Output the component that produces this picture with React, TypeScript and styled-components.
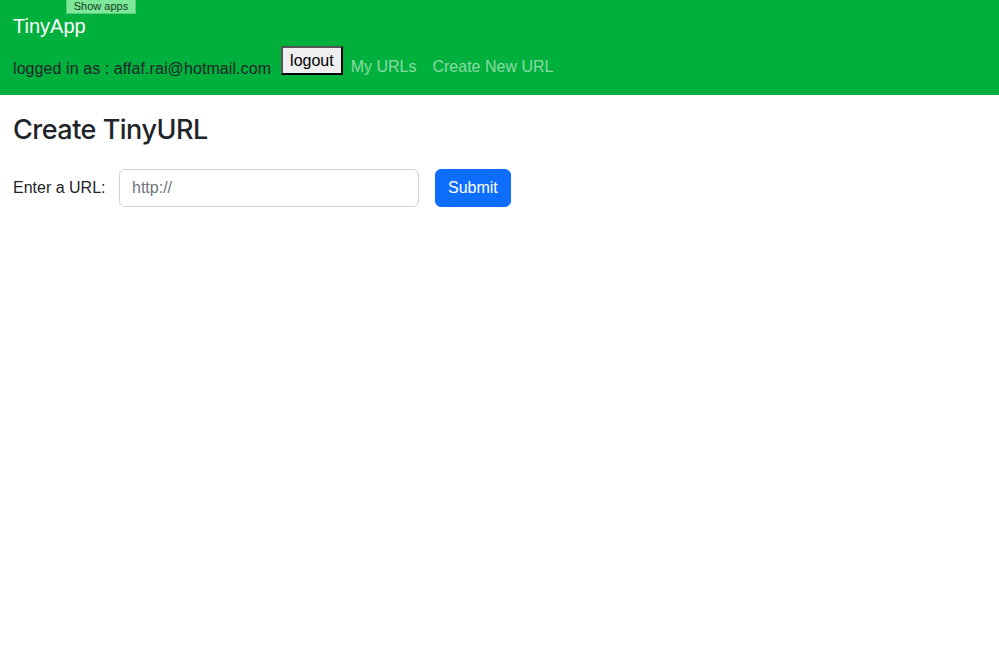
import styled, { createGlobalStyle } from 'styled-components';

const GlobalStyle = createGlobalStyle`
  body {
    margin: 0;
    font-family: "Liberation Sans", Arial, sans-serif;
    font-size: 16px;
    line-height: 1.5;
    color: #212529;
    background: #fff;
  }
  * {
    box-sizing: border-box;
  }
`;

const NavBar = styled.nav`
  position: relative;
  background: #00b03c;
  padding: 8px 13px 8px;
`;

const AppsBadge = styled.div`
  position: absolute;
  top: -6px;
  left: 66px;
  width: 70px;
  height: 20px;
  padding-top: 5px;
  background: #7ee89a;
  border: 1px solid #5ccc7c;
  font-size: 11px;
  line-height: 12px;
  text-align: center;
  color: #123d1e;
`;

const Brand = styled.a`
  display: block;
  padding: 3px 0 5px;
  font-size: 20px;
  line-height: 30px;
  color: #fff;
  text-decoration: none;
`;

const NavRow = styled.div`
  display: flex;
  align-items: flex-start;
`;

const LoggedIn = styled.span`
  margin-top: 11px;
  margin-right: 10px;
  color: #212529;
  letter-spacing: 0.08px;
`;

const LogoutButton = styled.button`
  height: 29px;
  padding: 0 7px;
  font-family: "Liberation Sans", Arial, sans-serif;
  font-size: 16px;
  color: #000;
  background: #efefef;
  border: 2px outset #555;
`;

const NavLink = styled.a`
  padding: 9px 8px 8px;
  color: rgba(255, 255, 255, 0.55);
  text-decoration: none;
`;

const Main = styled.main`
  padding: 18px 13px;
`;

const Heading = styled.h3`
  margin: 0 0 22px;
  font-family: Inter, "Liberation Sans", sans-serif;
  font-size: 27px;
  font-weight: 500;
  line-height: 34px;
  letter-spacing: -0.5px;
`;

const Form = styled.form`
  display: flex;
  align-items: center;
  gap: 16px;
`;

const Label = styled.label`
  width: 90px;
  white-space: nowrap;
  color: #212529;
`;

const UrlInput = styled.input`
  width: 300px;
  height: 38px;
  padding: 6px 12px;
  font-family: inherit;
  font-size: 16px;
  color: #212529;
  border: 1px solid #ced4da;
  border-radius: 6px;
  &::placeholder {
    color: #6c757d;
  }
`;

const SubmitButton = styled.button`
  height: 38px;
  padding: 6px 12px;
  font-family: inherit;
  font-size: 16px;
  color: #fff;
  background: #0d6efd;
  border: 1px solid #0d6efd;
  border-radius: 6px;
`;

export default function App() {
  return (
    <>
      <GlobalStyle />
      <NavBar>
        <AppsBadge>Show apps</AppsBadge>
        <Brand href="#">TinyApp</Brand>
        <NavRow>
          <LoggedIn>logged in as : affaf.rai@hotmail.com</LoggedIn>
          <LogoutButton>logout</LogoutButton>
          <NavLink href="#">My URLs</NavLink>
          <NavLink href="#">Create New URL</NavLink>
        </NavRow>
      </NavBar>
      <Main>
        <Heading>Create TinyURL</Heading>
        <Form onSubmit={(e) => e.preventDefault()}>
          <Label htmlFor="longURL">Enter a URL:</Label>
          <UrlInput id="longURL" type="text" placeholder="http://" />
          <SubmitButton type="submit">Submit</SubmitButton>
        </Form>
      </Main>
    </>
  );
}
